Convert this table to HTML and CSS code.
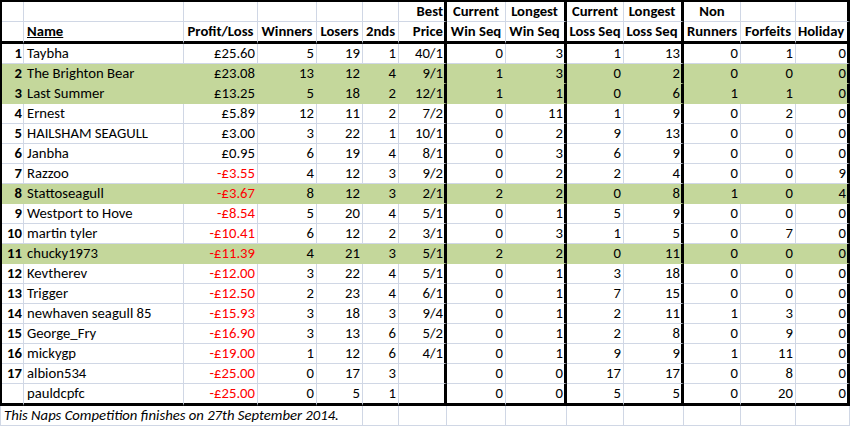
FILE: index.html
```html
<!DOCTYPE html>
<html>
<head>
<meta charset="utf-8">
<title>Naps Competition</title>
<link rel="stylesheet" href="styles.css">
</head>
<body>
<div class="sheet">
  <div class="table">
    <div class="row hdr1">
      <div></div><div></div><div></div><div></div><div></div><div></div>
      <div class="b r">Best</div><div class="b c">Current</div><div class="b c">Longest</div><div class="b c">Current</div><div class="b c">Longest</div><div class="b c">Non</div><div></div><div></div>
    </div>
    <div class="row hdr2">
      <div></div><div class="b t u">Name</div><div class="b c">Profit/Loss</div><div class="b c">Winners</div><div class="b c">Losers</div><div class="b c">2nds</div>
      <div class="b r">Price</div><div class="b c">Win Seq</div><div class="b c">Win Seq</div><div class="b c">Loss Seq</div><div class="b c">Loss Seq</div><div class="b c">Runners</div><div class="b c">Forfeits</div><div class="b c">Holiday</div>
    </div>
    <div class="row"><div class="rk">1</div><div class="t">Taybha</div><div>£25.60</div><div>5</div><div>19</div><div>1</div><div>40/1</div><div>0</div><div>3</div><div>1</div><div>13</div><div>0</div><div>1</div><div>0</div></div>
    <div class="row green"><div class="rk">2</div><div class="t">The Brighton Bear</div><div>£23.08</div><div>13</div><div>12</div><div>4</div><div>9/1</div><div>1</div><div>3</div><div>0</div><div>2</div><div>0</div><div>0</div><div>0</div></div>
    <div class="row green"><div class="rk">3</div><div class="t">Last Summer</div><div>£13.25</div><div>5</div><div>18</div><div>2</div><div>12/1</div><div>1</div><div>1</div><div>0</div><div>6</div><div>1</div><div>1</div><div>0</div></div>
    <div class="row"><div class="rk">4</div><div class="t">Ernest</div><div>£5.89</div><div>12</div><div>11</div><div>2</div><div>7/2</div><div>0</div><div>11</div><div>1</div><div>9</div><div>0</div><div>2</div><div>0</div></div>
    <div class="row"><div class="rk">5</div><div class="t">HAILSHAM SEAGULL</div><div>£3.00</div><div>3</div><div>22</div><div>1</div><div>10/1</div><div>0</div><div>2</div><div>9</div><div>13</div><div>0</div><div>0</div><div>0</div></div>
    <div class="row"><div class="rk">6</div><div class="t">Janbha</div><div>£0.95</div><div>6</div><div>19</div><div>4</div><div>8/1</div><div>0</div><div>3</div><div>6</div><div>9</div><div>0</div><div>0</div><div>0</div></div>
    <div class="row"><div class="rk">7</div><div class="t">Razzoo</div><div class="neg">-£3.55</div><div>4</div><div>12</div><div>3</div><div>9/2</div><div>0</div><div>2</div><div>2</div><div>4</div><div>0</div><div>0</div><div>9</div></div>
    <div class="row green"><div class="rk">8</div><div class="t">Stattoseagull</div><div class="neg">-£3.67</div><div>8</div><div>12</div><div>3</div><div>2/1</div><div>2</div><div>2</div><div>0</div><div>8</div><div>1</div><div>0</div><div>4</div></div>
    <div class="row"><div class="rk">9</div><div class="t">Westport to Hove</div><div class="neg">-£8.54</div><div>5</div><div>20</div><div>4</div><div>5/1</div><div>0</div><div>1</div><div>5</div><div>9</div><div>0</div><div>0</div><div>0</div></div>
    <div class="row"><div class="rk">10</div><div class="t">martin tyler</div><div class="neg">-£10.41</div><div>6</div><div>12</div><div>2</div><div>3/1</div><div>0</div><div>3</div><div>1</div><div>5</div><div>0</div><div>7</div><div>0</div></div>
    <div class="row green"><div class="rk">11</div><div class="t">chucky1973</div><div class="neg">-£11.39</div><div>4</div><div>21</div><div>3</div><div>5/1</div><div>2</div><div>2</div><div>0</div><div>11</div><div>0</div><div>0</div><div>0</div></div>
    <div class="row"><div class="rk">12</div><div class="t">Kevtherev</div><div class="neg">-£12.00</div><div>3</div><div>22</div><div>4</div><div>5/1</div><div>0</div><div>1</div><div>3</div><div>18</div><div>0</div><div>0</div><div>0</div></div>
    <div class="row"><div class="rk">13</div><div class="t">Trigger</div><div class="neg">-£12.50</div><div>2</div><div>23</div><div>4</div><div>6/1</div><div>0</div><div>1</div><div>7</div><div>15</div><div>0</div><div>0</div><div>0</div></div>
    <div class="row"><div class="rk">14</div><div class="t">newhaven seagull 85</div><div class="neg">-£15.93</div><div>3</div><div>18</div><div>3</div><div>9/4</div><div>0</div><div>1</div><div>2</div><div>11</div><div>1</div><div>3</div><div>0</div></div>
    <div class="row"><div class="rk">15</div><div class="t">George_Fry</div><div class="neg">-£16.90</div><div>3</div><div>13</div><div>6</div><div>5/2</div><div>0</div><div>1</div><div>2</div><div>8</div><div>0</div><div>9</div><div>0</div></div>
    <div class="row"><div class="rk">16</div><div class="t">mickygp</div><div class="neg">-£19.00</div><div>1</div><div>12</div><div>6</div><div>4/1</div><div>0</div><div>1</div><div>9</div><div>9</div><div>1</div><div>11</div><div>0</div></div>
    <div class="row"><div class="rk">17</div><div class="t">albion534</div><div class="neg">-£25.00</div><div>0</div><div>17</div><div>3</div><div></div><div>0</div><div>0</div><div>17</div><div>17</div><div>0</div><div>8</div><div>0</div></div>
    <div class="row last"><div class="rk"></div><div class="t">pauldcpfc</div><div class="neg">-£25.00</div><div>0</div><div>5</div><div>1</div><div></div><div>0</div><div>0</div><div>5</div><div>5</div><div>0</div><div>20</div><div>0</div></div>
  </div>
  <div class="foot">
    <div class="note">This Naps Competition finishes on 27th September 2014.</div>
    <div></div><div></div><div></div><div></div><div></div><div></div><div></div><div></div><div></div>
  </div>
</div>
</body>
</html>
```

FILE: styles.css
```css
html, body {
  margin: 0;
  padding: 0;
  background: #ffffff;
}

body {
  font-family: "Carlito", "Calibri", "Lato", sans-serif;
  font-size: 14.7px;
  color: #000000;
}

.sheet {
  width: 850px;
  height: 426px;
  overflow: hidden;
}

.table {
  display: grid;
  grid-template-columns: 22px 160px 74px 59px 46px 36px 48px 59px 61px 57px 60px 57px 55px 54px;
  grid-template-rows: 20px 22px repeat(17, 20px) 22px;
  border-top: 2px solid #000000;
  border-left: 2px solid #000000;
}

.row {
  display: contents;
}

.row > div {
  box-sizing: border-box;
  border-right: 1px solid #d0d7e5;
  border-bottom: 1px solid #d0d7e5;
  line-height: 19px;
  text-align: right;
  padding: 0 2px 0 3px;
  white-space: nowrap;
  overflow: hidden;
}

.green > div {
  background: #c4d79b;
  border-right-color: #c4d79b;
  border-bottom-color: #c4d79b;
}

.row > div:nth-child(7),
.row > div:nth-child(9),
.row > div:nth-child(11),
.row > div:nth-child(14) {
  border-right: 3px solid #000000;
  padding-right: 1px;
}

.hdr2 > div,
.last > div {
  border-bottom: 3px solid #000000;
}

.row > .t {
  text-align: left;
}

.row > .c {
  text-align: center;
  padding: 0;
}

.row > .rk {
  font-weight: bold;
  padding-right: 1px;
  padding-left: 0;
}

.b {
  font-weight: bold;
}

.u {
  text-decoration: underline;
}

.neg {
  color: #ff0000;
}

.foot {
  display: grid;
  grid-template-columns: 24px 160px 74px 59px 46px 36px 48px 59px 61px 57px 60px 57px 55px 54px;
  grid-template-rows: 20px;
}

.foot > div {
  box-sizing: border-box;
  border-right: 1px solid #d0d7e5;
  border-bottom: 1px solid #d0d7e5;
}

.foot > .note {
  grid-column: 1 / span 5;
  border-left: 1px solid #d0d7e5;
  padding-left: 3px;
  font-style: italic;
  line-height: 19px;
  white-space: nowrap;
}
```
